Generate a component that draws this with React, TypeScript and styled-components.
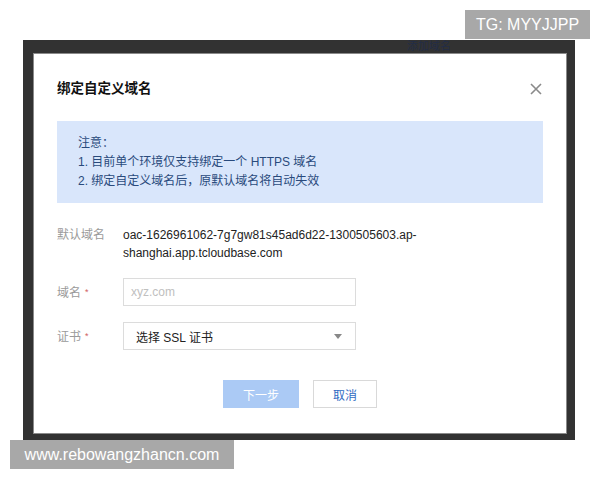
import styled, { createGlobalStyle } from "styled-components"

const Global = createGlobalStyle`
  html, body {
    margin: 0;
    padding: 0;
    background: #fff;
  }
  body {
    font-family: "Liberation Sans", "Noto Sans CJK SC", sans-serif;
    font-size: 12px;
    color: #333;
  }
`

const Page = styled.div`
  position: relative;
  width: 600px;
  height: 480px;
  padding: 40px 0 0 23px;
  box-sizing: border-box;
  overflow: hidden;
`

const Frame = styled.div`
  width: 552px;
  height: 400px;
  background: #323232;
  display: flex;
  flex-direction: column;
  padding: 0 8px 6px 10px;
  box-sizing: border-box;
`

const BehindStrip = styled.div`
  height: 13px;
  padding-left: 374px;
  overflow: hidden;
  font-size: 11px;
  line-height: 13px;
  color: #222d47;
`

const Modal = styled.div`
  flex: 1;
  background: #fff;
  border: 1px solid #8a8a8a;
  padding: 0 23px;
  display: flex;
  flex-direction: column;
`

const Header = styled.div`
  display: flex;
  align-items: center;
  justify-content: space-between;
  padding-top: 25px;
  height: 20px;
`

const Title = styled.h2`
  margin: 0;
  font-size: 13.5px;
  font-weight: bold;
  color: #111;
  line-height: 20px;
`

const Close = styled.button`
  border: 0;
  background: none;
  padding: 0;
  width: 12px;
  height: 12px;
  margin-right: 1px;
  display: flex;
  cursor: pointer;
`

const Notice = styled.div`
  margin-top: 22px;
  background: #d9e6fb;
  color: #294a7c;
  padding: 13px 21px 12px;
  line-height: 19px;
`

const Form = styled.div`
  margin-top: 23px;
  display: flex;
  flex-direction: column;
  gap: 16px;
`

const Row = styled.div<{ $center?: boolean }>`
  display: flex;
  align-items: ${({ $center }) => ($center ? "center" : "flex-start")};
`

const Label = styled.div`
  width: 66px;
  flex-shrink: 0;
  color: #9a9a9a;
  line-height: 18px;
`

const Required = styled.span`
  color: #d06060;
  font-size: 9px;
  margin-left: 4px;
  vertical-align: 2px;
`

const Value = styled.div`
  width: 296px;
  line-height: 18px;
  color: #222;
`

const Field = styled.div<{ $pad: number }>`
  width: 233px;
  height: 28px;
  box-sizing: border-box;
  border: 1px solid #dcdcdc;
  display: flex;
  align-items: center;
  justify-content: space-between;
  padding: 0 13px 0 ${({ $pad }) => $pad}px;
`

const Placeholder = styled.span`
  color: #c0c0c0;
`

const SelectText = styled.span`
  color: #222;
`

const Arrow = styled.span`
  width: 0;
  height: 0;
  border-left: 4px solid transparent;
  border-right: 4px solid transparent;
  border-top: 5px solid #888;
`

const Footer = styled.div`
  margin-top: 30px;
  display: flex;
  justify-content: center;
  gap: 14px;
`

const Button = styled.button<{ $primary?: boolean }>`
  height: 28px;
  width: ${({ $primary }) => ($primary ? 76 : 64)}px;
  font-family: inherit;
  font-size: 12px;
  border: 1px solid ${({ $primary }) => ($primary ? "#abcaf5" : "#d9d9d9")};
  background: ${({ $primary }) => ($primary ? "#abcaf5" : "#fff")};
  color: ${({ $primary }) => ($primary ? "#fff" : "#2f6bc2")};
  padding: 0;
`

const Watermark = styled.div<{ $top: number; $left: number; $w: number }>`
  position: absolute;
  top: ${({ $top }) => $top}px;
  left: ${({ $left }) => $left}px;
  width: ${({ $w }) => $w}px;
  height: 29px;
  background: #a8a8a8;
  color: #fff;
  font-size: 16px;
  line-height: 29px;
  text-align: center;
`

export default function App() {
  return (
    <>
      <Global />
      <Page>
        <Frame>
          <BehindStrip>添加域名</BehindStrip>
          <Modal>
            <Header>
              <Title>绑定自定义域名</Title>
              <Close aria-label="关闭">
                <svg width="12" height="12" viewBox="0 0 12 12">
                  <path d="M1 1L11 11M11 1L1 11" stroke="#8a8a8a" strokeWidth="1.6" />
                </svg>
              </Close>
            </Header>
            <Notice>
              <div>注意：</div>
              <div>1. 目前单个环境仅支持绑定一个 HTTPS 域名</div>
              <div>2. 绑定自定义域名后，原默认域名将自动失效</div>
            </Notice>
            <Form>
              <Row>
                <Label>默认域名</Label>
                <Value>oac-1626961062-7g7gw81s45ad6d22-1300505603.ap-shanghai.app.tcloudbase.com</Value>
              </Row>
              <Row $center>
                <Label>
                  域名<Required>*</Required>
                </Label>
                <Field $pad={7}>
                  <Placeholder>xyz.com</Placeholder>
                </Field>
              </Row>
              <Row $center>
                <Label>
                  证书<Required>*</Required>
                </Label>
                <Field $pad={12}>
                  <SelectText>选择 SSL 证书</SelectText>
                  <Arrow />
                </Field>
              </Row>
            </Form>
            <Footer>
              <Button $primary>下一步</Button>
              <Button>取消</Button>
            </Footer>
          </Modal>
        </Frame>
        <Watermark $top={10} $left={465} $w={125}>TG: MYYJJPP</Watermark>
        <Watermark $top={440} $left={10} $w={224}>www.rebowangzhancn.com</Watermark>
      </Page>
    </>
  )
}
